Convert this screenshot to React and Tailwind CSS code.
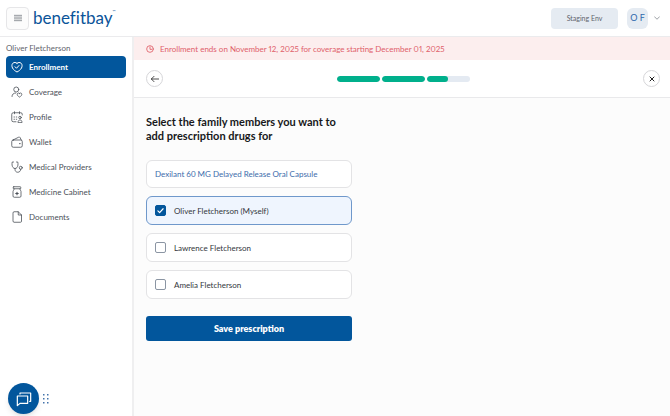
import { useState } from 'react';

const navItems = [
  { id: 'enrollment', label: 'Enrollment', icon: HeartCheckIcon },
  { id: 'coverage', label: 'Coverage', icon: CoverageIcon },
  { id: 'profile', label: 'Profile', icon: ProfileIcon },
  { id: 'wallet', label: 'Wallet', icon: WalletIcon },
  { id: 'providers', label: 'Medical Providers', icon: StethoscopeIcon },
  { id: 'cabinet', label: 'Medicine Cabinet', icon: MedicineIcon },
  { id: 'documents', label: 'Documents', icon: DocumentIcon },
];

const members = [
  { id: 1, name: 'Oliver Fletcherson (Myself)' },
  { id: 2, name: 'Lawrence Fletcherson' },
  { id: 3, name: 'Amelia Fletcherson' },
];

const steps = [100, 100, 50];

function Icon({ className = 'size-3', strokeWidth = 1.6, children }) {
  return (
    <svg
      className={`shrink-0 ${className}`}
      viewBox="0 0 24 24"
      fill="none"
      stroke="currentColor"
      strokeWidth={strokeWidth}
      strokeLinecap="round"
      strokeLinejoin="round"
      aria-hidden="true"
    >
      {children}
    </svg>
  );
}

function HeartCheckIcon() {
  return (
    <Icon strokeWidth={2}>
      <path d="M12 4.5C10 2.6 6 2.2 3.7 4.5C1.2 7 1.5 11 3 14C5 17.8 9 20.5 12 22C15 20.5 19 17.8 21 14C22.5 11 22.8 7 20.3 4.5C18 2.2 14 2.6 12 4.5Z" />
      <path d="M8 11.5l3 3 5-5.500" />
    </Icon>
  );
}

function CoverageIcon() {
  return (
    <Icon>
      <circle cx="10.5" cy="7" r="5" />
      <path d="M2 21c0-4.500 3-7 7.500-7" />
      <path d="M17 14.800c-1.200-1.300-3-1.100-3.900 0-1 1.200-.8 3 .1 4.200.9 1.300 2.500 2.400 3.800 3.200 1.300-.8 2.900-1.900 3.800-3.200.9-1.200 1.100-3 .1-4.200-.9-1.100-2.700-1.300-3.900 0z" />
    </Icon>
  );
}

function ProfileIcon() {
  return (
    <Icon>
      <path d="M10 21.500H4.500a3 3 0 0 1-3-3V6.500a3 3 0 0 1 3-3h15a3 3 0 0 1 3 3V8" />
      <path d="M7 1.500v4M17 1.500v4M6 12h1M10.500 12h1M6 16.500h1M10.500 16.500h1" />
      <circle cx="18" cy="13" r="2.500" />
      <path d="M14 22.500c0-3 1.500-4.500 4-4.500s4 1.500 4 4.500z" />
    </Icon>
  );
}

function WalletIcon() {
  return (
    <Icon>
      <rect x="1.500" y="8" width="21" height="14.500" rx="3" />
      <path d="M4 8l11.500-5.700a2 2 0 0 1 2.700.9L20.500 8" />
      <path d="M17.500 15.200h.5" strokeWidth={2.600} />
    </Icon>
  );
}

function StethoscopeIcon() {
  return (
    <Icon>
      <path d="M5 2H2.500C1.500 6 2 10.500 4 13c1 1.300 2.300 2 4 2s3-.7 4-2c2-2.500 2.500-7 1.500-11H11" />
      <path d="M8 15v1.500c0 3.500 2 6 5.500 6s6-2.500 6-6" />
      <circle cx="19.500" cy="13.500" r="3" />
    </Icon>
  );
}

function MedicineIcon() {
  return (
    <Icon>
      <rect x="4.500" y="1.500" width="15" height="4" rx="1" />
      <path d="M6 5.500v2.200C4.800 8.300 4 9.500 4 11v9a2.500 2.500 0 0 0 2.500 2.500h11A2.500 2.500 0 0 0 20 20v-9c0-1.500-.8-2.700-2-3.300V5.500" />
      <path d="M12 12.500v5M9.500 15h5" strokeWidth={2.200} />
    </Icon>
  );
}

function DocumentIcon() {
  return (
    <Icon>
      <path d="M4 3.500a2 2 0 0 1 2-2h8.500L21 8v12.500a2 2 0 0 1-2 2H6a2 2 0 0 1-2-2z" />
      <path d="M14.500 1.500V8H21" />
    </Icon>
  );
}

function Header() {
  return (
    <header className="flex items-center justify-between h-[37px] pl-1.5 pr-2.5 border-b border-[#ebebed] bg-white">
      <div className="flex items-center gap-1">
        <button
          type="button"
          aria-label="Toggle menu"
          className="flex items-center justify-center size-[23px] rounded border border-[#e6e6e8] bg-[#fcfcfc] text-[#7b8087]"
        >
          <Icon className="size-2" strokeWidth={2.4}>
            <path d="M1 4h22M1 9.300h22M1 14.600h22M1 20h22" />
          </Icon>
        </button>
        <a
          href="#"
          className="flex items-start text-[17px] leading-6 text-[#0b5499] [font-variant-ligatures:none]"
        >
          benefitbay
          <span className="text-[4px] leading-3">™</span>
        </a>
      </div>
      <div className="flex items-center gap-[9px]">
        <span className="flex items-center justify-center w-[67px] h-[21px] rounded bg-[#e5ebf2] text-[7px] text-[#5f646c]">
          Staging Env
        </span>
        <button type="button" aria-label="Account menu" className="flex items-center gap-1.5">
          <span className="flex items-center justify-center size-[21px] rounded-md bg-[#e5ebf2] text-[9px] text-[#2f69ad]">
            O F
          </span>
          <Icon className="size-1.5 text-[#7b8087]" strokeWidth={3}>
            <path d="M2 7l10 10L22 7" />
          </Icon>
        </button>
      </div>
    </header>
  );
}

function Sidebar({ active, onSelect }) {
  return (
    <aside className="w-[134px] shrink-0 border-r-2 border-[#efeff0] bg-white pt-1 px-1.5">
      <p className="text-[8px] leading-3.5 text-[#5f646c]">Oliver Fletcherson</p>
      <nav className="flex flex-col gap-[3px] mt-px">
        {navItems.map(({ id, label, icon: NavIcon }) => (
          <button
            key={id}
            type="button"
            onClick={() => onSelect(id)}
            className={`flex items-center gap-1.5 h-[22px] pl-[5px] rounded text-left text-[8px] ${
              active === id ? 'bg-[#02569c] text-white font-bold' : 'text-[#4b5058]'
            }`}
          >
            <NavIcon />
            {label}
          </button>
        ))}
      </nav>
    </aside>
  );
}

function StepBar() {
  return (
    <div className="flex items-center justify-between h-[38px] pl-3 pr-2.5 border-b border-[#e9e9eb] bg-white">
      <button
        type="button"
        aria-label="Go back"
        className="flex items-center justify-center size-[17px] rounded-full border border-[#d6d6d9] text-[#222]"
      >
        <Icon className="size-2" strokeWidth={2.4}>
          <path d="M23 12H1M9 4l-8 8 8 8" />
        </Icon>
      </button>
      <div className="flex gap-0.5">
        {steps.map((percent, idx) => (
          <div key={idx} className="w-[43px] h-1.5 rounded-full bg-[#e4eaf2] overflow-hidden">
            <div className="h-full rounded-full bg-[#00b08c]" style={{ width: `${percent}%` }} />
          </div>
        ))}
      </div>
      <button
        type="button"
        aria-label="Close"
        className="flex items-center justify-center size-[17px] rounded-full border border-[#d6d6d9] text-[#222]"
      >
        <Icon className="size-1.5" strokeWidth={4}>
          <path d="M4 4l16 16M20 4L4 20" />
        </Icon>
      </button>
    </div>
  );
}

function MemberOption({ member, checked, onToggle }) {
  return (
    <label
      className={`flex items-center gap-2 h-[29px] px-2 rounded-md border text-[8px] text-[#33373d] cursor-pointer ${
        checked ? 'border-[#6f98cb] bg-[#eff5fe]' : 'border-[#e3e3e5] bg-white'
      }`}
    >
      <span className="grid shrink-0">
        <input
          type="checkbox"
          checked={checked}
          onChange={() => onToggle(member.id)}
          className="col-start-1 row-start-1 size-[11px] appearance-none rounded-xs border border-[#8b95a3] bg-white checked:border-[#02569c] checked:bg-[#02569c]"
        />
        {checked && (
          <Icon
            className="size-[7px] col-start-1 row-start-1 place-self-center text-white pointer-events-none"
            strokeWidth={4}
          >
            <path d="M3 13l6 6L21 6" />
          </Icon>
        )}
      </span>
      {member.name}
    </label>
  );
}

function ChatLauncher() {
  return (
    <div className="fixed bottom-0.5 left-2 flex items-center gap-1">
      <button
        type="button"
        aria-label="Open chat"
        className="flex items-center justify-center size-[31px] rounded-full bg-[#02569c] text-white shadow-md"
      >
        <Icon className="size-4" strokeWidth={1.8}>
          <path d="M2 7.500h15.500v11H6L2 22z" />
          <path d="M6 4.500V3h16v12.500h-1.500" />
        </Icon>
      </button>
      <svg className="w-1.5 h-2.5" viewBox="0 0 6 10" fill="#4474ab" aria-hidden="true">
        {[0, 4, 8].map((y) => (
          <g key={y}>
            <rect x="0" y={y} width="1.500" height="1.500" />
            <rect x="4" y={y} width="1.500" height="1.500" />
          </g>
        ))}
      </svg>
    </div>
  );
}

export default function App() {
  const [active, setActive] = useState('enrollment');
  const [selected, setSelected] = useState([1]);

  function toggleMember(id) {
    setSelected((prev) => (prev.includes(id) ? prev.filter((m) => m !== id) : [...prev, id]));
  }

  return (
    <div className="flex flex-col min-h-screen bg-[#fcfcfc] font-[Lato,'Open_Sans',sans-serif]">
      <Header />
      <div className="flex flex-1">
        <Sidebar active={active} onSelect={setActive} />
        <main className="flex-1 min-w-0">
          <div className="flex items-center gap-1.5 h-[23px] px-3 bg-[#fceeee] text-[8px] text-[#e0606a] proportional-nums">
            <Icon className="size-2" strokeWidth={2.6}>
              <circle cx="12" cy="12" r="10" />
              <path d="M12 6v7h5" />
            </Icon>
            Enrollment ends on November 12, 2025 for coverage starting December 01, 2025
          </div>
          <StepBar />
          <form
            className="w-full max-w-[230px] px-3 pt-[17px]"
            onSubmit={(e) => e.preventDefault()}
          >
            <h1 className="text-[11px] leading-3.5 font-bold text-[#17181a]">
              Select the family members you want to add prescription drugs for
            </h1>
            <div className="flex flex-col gap-2 mt-[17px]">
              <div className="flex items-center h-7 px-2 rounded-md border border-[#e3e3e5] bg-white text-[8px] text-[#3c6cab]">
                Dexilant 60 MG Delayed Release Oral Capsule
              </div>
              {members.map((member) => (
                <MemberOption
                  key={member.id}
                  member={member}
                  checked={selected.includes(member.id)}
                  onToggle={toggleMember}
                />
              ))}
            </div>
            <button
              type="submit"
              className="w-full h-[25px] mt-[17px] rounded-[3px] bg-[#02569c] text-[9px] font-extrabold text-white"
            >
              Save prescription
            </button>
          </form>
        </main>
      </div>
      <ChatLauncher />
    </div>
  );
}
